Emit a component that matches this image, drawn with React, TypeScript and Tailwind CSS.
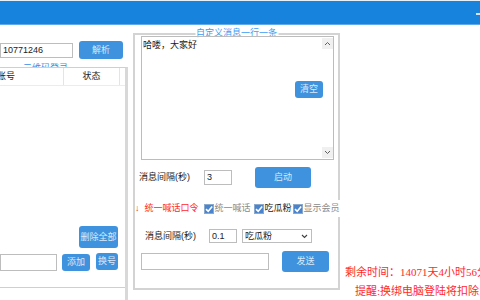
import React from "react";

function Check() {
  return (
    <svg width="10" height="10" viewBox="0 0 10 10" className="shrink-0">
      <rect x="0.5" y="0.5" width="9" height="9" fill="#4a84cc" stroke="#8aa9cf" />
      <path d="M2 5.2 L4.2 7.3 L8.2 2.6" fill="none" stroke="#ffffff" strokeWidth="1.6" />
    </svg>
  );
}

function Btn({ children, cls }: { children: React.ReactNode; cls: string }) {
  return (
    <div className={"flex items-center justify-center rounded-[3px] bg-[#3f93de] text-[#d9e9f8] shrink-0 " + cls}>
      {children}
    </div>
  );
}

export default function App() {
  return (
    <div className="w-[480px] h-[300px] overflow-hidden bg-white flex flex-col text-[9px] leading-[11px] text-[#222] [font-family:'Liberation_Sans','Noto_Sans_CJK_SC',sans-serif]">
      {/* title bar */}
      <div className="h-[1px] bg-[#e6eef6]" />
      <div className="h-[23px] bg-[#1783dc] flex items-center justify-end">
        <div className="w-[6px] h-[2px] bg-[#d0e5f8] mr-[-2px] mt-[2px]" />
      </div>
      <div className="h-[1px] bg-[#5eaaea]" />

      <div className="flex flex-1 min-h-0">
        {/* left column */}
        <div className="w-[128px] shrink-0 flex flex-col">
          <div className="mt-[16px] h-[18px] flex items-center">
            <div className="w-[73px] h-[15px] border border-[#bdbdbd] flex items-center pl-[2px]">10771246</div>
            <Btn cls="ml-[6px] w-[44px] h-[18px]">解析</Btn>
          </div>
          <div className="h-[8px] overflow-hidden pl-[23px] pt-[4px] text-[#3a8ee6] leading-[10px] whitespace-nowrap">二维码登录</div>
          <div className="flex-1 flex flex-col border-t border-[#cfcfcf] border-r-[3px] border-r-[#d8d8d8]">
            <div className="h-[18px] flex border-b border-[#ececec] shrink-0">
              <div className="w-[64px] border-r border-[#e4e4e4] flex items-center">
                <span className="ml-[-3px]">账号</span>
              </div>
              <div className="w-[56px] border-r border-[#e4e4e4] flex items-center justify-center">状态</div>
            </div>
            <div className="h-[202px] shrink-0 flex flex-col justify-end pb-[16px] border-b border-[#cfcfcf]">
              <Btn cls="ml-[79px] w-[39px] h-[22px]">删除全部</Btn>
              <div className="mt-[5px] h-[18px] flex items-center">
                <div className="w-[57px] h-[17px] border border-[#bdbdbd]" />
                <Btn cls="ml-[5px] w-[28px] h-[17px]">添加</Btn>
                <Btn cls="ml-[6px] w-[22px] h-[17px] mb-[1px]">换号</Btn>
              </div>
            </div>
          </div>
        </div>

        {/* center column */}
        <div className="ml-[5px] w-[207px] shrink-0 mt-[8px] h-[257px] flex flex-col border-l-2 border-b-2 border-[#d3d3d3]">
          <div className="h-[167px] shrink-0 relative border-t-2 border-r-2 border-[#d3d3d3] flex flex-col">
            <div className="absolute -top-[7px] left-1/2 -translate-x-1/2 bg-white px-[1px] leading-[10px] text-[#3b9cf5] whitespace-nowrap">
              自定义消息一行一条
            </div>
            <div className="relative mt-[1px] ml-[6px] w-[193px] h-[124px] border border-[#bcbcbc] flex">
              <div className="flex-1 pt-[3px] pl-[1px]">哈喽，大家好</div>
              <div className="w-[11px] flex flex-col justify-between py-[1px]">
                <div className="h-[11px] bg-[#f0f0f0] flex items-center justify-center">
                  <svg width="7" height="5" viewBox="0 0 7 5">
                    <path d="M1 4 L3.5 1.5 L6 4" fill="none" stroke="#606060" strokeWidth="1" />
                  </svg>
                </div>
                <div className="h-[11px] bg-[#f0f0f0] flex items-center justify-center">
                  <svg width="7" height="5" viewBox="0 0 7 5">
                    <path d="M1 1 L3.5 3.5 L6 1" fill="none" stroke="#606060" strokeWidth="1" />
                  </svg>
                </div>
              </div>
              <Btn cls="absolute left-[153px] top-[44px] w-[28px] h-[17px]">清空</Btn>
            </div>
            <div className="mt-[7px] h-[21px] flex items-center">
              <span className="ml-[4px] w-[65px] shrink-0">消息间隔(秒)</span>
              <div className="w-[28px] h-[15px] border border-[#bdbdbd] flex items-center pl-[2px]">3</div>
              <Btn cls="ml-[23px] w-[56px] h-[21px]">启动</Btn>
            </div>
          </div>
          <div className="h-[17px] shrink-0 flex items-center whitespace-nowrap">
            <span className="text-[#ff2a2a] ml-[0px]">↓</span>
            <span className="text-[#ff2a2a] ml-[5px]">统一喊话口令</span>
            <span className="ml-[5px] flex items-center gap-[1px]">
              <Check />
              <span className="text-[#8a8a8a]">统一喊话</span>
            </span>
            <span className="ml-[3px] flex items-center gap-[1px]">
              <Check />
              <span>吃瓜粉</span>
            </span>
            <span className="ml-[1px] flex items-center gap-[1px]">
              <Check />
              <span className="text-[#8a8a8a]">显示会员</span>
            </span>
          </div>
          <div className="flex-1 border-r-2 border-[#d3d3d3] flex flex-col">
            <div className="mt-[12px] h-[14px] flex items-center">
              <span className="ml-[10px] w-[64px] shrink-0">消息间隔(秒)</span>
              <div className="w-[28px] h-[14px] border border-[#bdbdbd] flex items-center pl-[2px]">0.1</div>
              <div className="ml-[5px] w-[70px] h-[14px] border border-[#bdbdbd] flex items-center justify-between pl-[2px] pr-[3px]">
                <span>吃瓜粉</span>
                <svg width="7" height="5" viewBox="0 0 7 5">
                  <path d="M1 1 L3.5 3.5 L6 1" fill="none" stroke="#404040" strokeWidth="1.1" />
                </svg>
              </div>
            </div>
            <div className="mt-[8px] h-[21px] flex items-center">
              <div className="ml-[6px] w-[128px] h-[17px] border border-[#bdbdbd]" />
              <Btn cls="ml-[13px] w-[47px] h-[21px]">发送</Btn>
            </div>
          </div>
        </div>

        {/* right column */}
        <div className="flex-1 min-w-0 overflow-hidden flex flex-col justify-end whitespace-nowrap pb-[2px] gap-[5px] text-[#ff2a2a] text-[11px] leading-[14px] [font-family:'Liberation_Serif','Noto_Sans_CJK_SC',serif]">
          <div className="pl-[5px]">剩余时间：14071天4小时56分钟</div>
          <div className="pl-[15px]">提醒:换绑电脑登陆将扣除1天</div>
        </div>
      </div>
    </div>
  );
}
